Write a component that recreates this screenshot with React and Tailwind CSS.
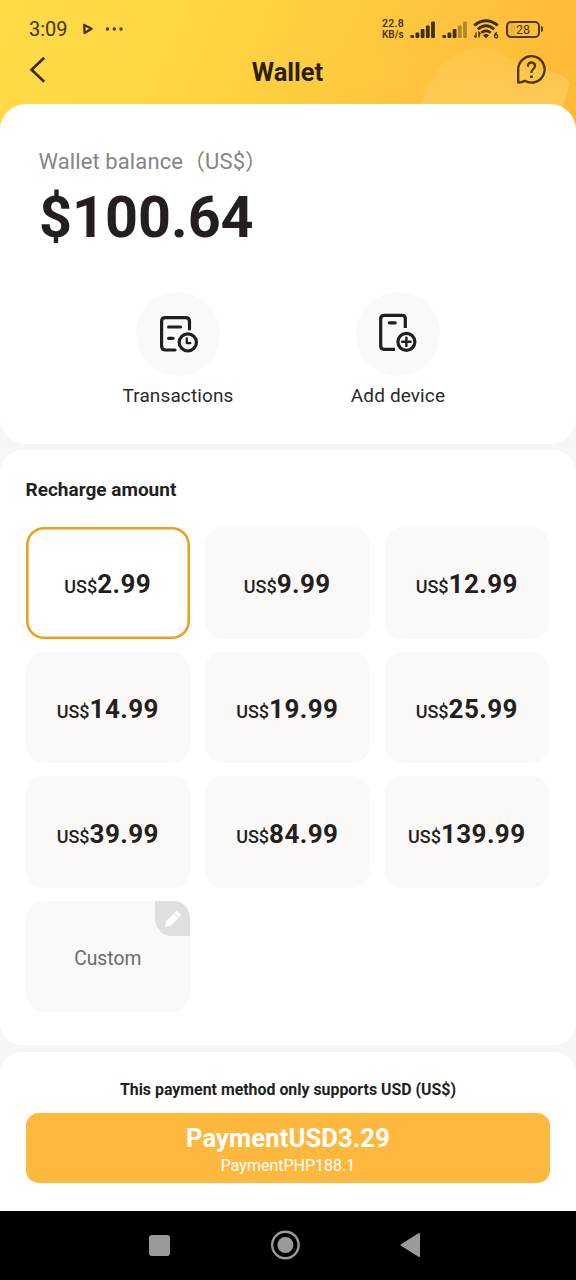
import React from "react";

const amounts = ["2.99", "9.99", "12.99", "14.99", "19.99", "25.99", "39.99", "84.99", "139.99"];

function SignalBars({ weak }) {
  const bars = [
    [0, 14, 3], [5.2, 11.5, 5.5], [10.4, 8, 9], [15.6, 4.5, 12.5], [20.8, 0.5, 16.5],
  ];
  return (
    <svg className="h-[17px] w-[26px]" viewBox="0 0 26 17" fill="#3d2f10">
      {bars.map(([x, y, h], i) => (
        <rect key={x} x={x + 0.3} y={y} width="3.8" height={h} rx="1" opacity={weak && i > 2 ? 0.4 : 1} />
      ))}
    </svg>
  );
}

function StatusBar() {
  return (
    <div className="flex h-[58px] items-center pl-[29px] pr-[33px] text-[#453611]">
      <span className="w-[40px] text-[20px] leading-6">3:09</span>
      <svg className="ml-[13px] h-[12px] w-[12px]" viewBox="0 0 12 12">
        <path d="M2.2 2 L9.6 5.8 L2.6 10 Z" fill="none" stroke="#453611" strokeWidth="2.4" strokeLinejoin="round" />
      </svg>
      <svg className="ml-[11px] h-[4px] w-[20px]" viewBox="0 0 20 4" fill="#453611">
        <circle cx="2.5" cy="2" r="1.7" /><circle cx="9.3" cy="2" r="1.7" /><circle cx="16" cy="2" r="1.7" />
      </svg>
      <div className="ml-auto flex items-center">
        <div className="mr-px w-[27px] font-semibold leading-[11px]">
          <div className="whitespace-nowrap text-[10.5px] tracking-[0.25px]">22.8</div>
          <div className="whitespace-nowrap text-[10px]">KB/s</div>
        </div>
        <SignalBars />
        <span className="w-[6px]" />
        <SignalBars weak />
        <svg className="ml-[5px] h-[20px] w-[26px]" viewBox="0 0 26 20" fill="none" stroke="#3d2f10">
          <path d="M1.2 6.4 Q13 -3 24.8 6.4" strokeWidth="2.8" />
          <path d="M4.8 10.2 Q13 3.2 21.2 10.2" strokeWidth="2.8" />
          <path d="M8.2 13.8 Q13 10 17.8 13.8" strokeWidth="2.5" />
          <path d="M10 16.2 Q13 13.8 16 16.2 L13 19.2 Z" fill="#3d2f10" stroke="none" />
          <path d="M3 13.5 V18.5 M1.2 16.8 L3 18.5 M6 18.5 V13.5 L7.6 15.2" strokeWidth="1.4" />
          <path d="M24 13.7 Q21.5 14.5 21.5 17 A1.6 1.6 0 1 0 23.1 15.6 Q22 15.7 21.6 16.8" strokeWidth="1.3" />
        </svg>
        <div className="ml-[7px] flex items-center">
          <div className="flex h-[17px] w-[34px] items-center justify-center rounded-[5px] border-2 border-[#4d3a10] bg-linear-to-r from-[#eeb43a] from-25% to-transparent to-25% pt-[2px] text-[12.5px] leading-none">28</div>
          <div className="ml-px h-[6px] w-[2px] rounded-r-sm bg-[#4d3a10]" />
        </div>
      </div>
    </div>
  );
}

function TransactionsIcon() {
  return (
    <svg className="ml-px h-10 w-10" viewBox="0 0 40 40" fill="none" stroke="#211e1c" strokeWidth="3.2" strokeLinecap="round" strokeLinejoin="round">
      <path d="M30.5 15 V7.5 Q30.5 3.7 26.5 3.7 H6.5 Q2.6 3.7 2.6 7.5 V32 Q2.6 36 6.5 36 H16" />
      <path d="M9.6 13 H21.5 M9.6 24.3 H14" />
      <circle cx="28.8" cy="28.4" r="8.6" />
      <path d="M27.8 24.5 V29.2 H31.3" strokeWidth="2.3" />
    </svg>
  );
}

function AddDeviceIcon() {
  return (
    <svg className="mb-[2px] h-10 w-10" viewBox="0 0 40 40" fill="none" stroke="#211e1c" strokeWidth="3.2">
      <path d="M27.3 15 V5.6 Q27.3 2.4 24.2 2.4 H6.2 Q2.7 2.4 2.7 5.6 V33 Q2.7 36.3 6.2 36.3 H17" />
      <path d="M11.4 9.8 H17.2" strokeLinecap="round" />
      <circle cx="28.4" cy="28.8" r="8.5" />
      <path d="M28.4 24.6 V33 M24.2 28.8 H32.6" strokeWidth="2.4" strokeLinecap="round" />
    </svg>
  );
}

function Action({ label, children }) {
  return (
    <div className="flex w-[220px] flex-col items-center">
      <div className="flex h-[84px] w-[84px] items-center justify-center rounded-full bg-[#faf9f7]">{children}</div>
      <span className="mt-[7px] text-[19px] leading-[26px] tracking-[0.12px] text-[#2c2927]">{label}</span>
    </div>
  );
}

export default function App() {
  return (
    <div className="flex h-[1280px] w-[576px] flex-col overflow-hidden bg-[#f6f6f6] font-[Roboto,'Noto_Sans_CJK_SC',sans-serif] text-[#241f1e]">
      <div className="relative h-[104px] shrink-0">
        <svg className="absolute left-0 top-0 h-[140px] w-[576px]" viewBox="0 0 576 140">
          <defs>
            <linearGradient id="sun" gradientUnits="userSpaceOnUse" x1="0" y1="0" x2="520" y2="230">
              <stop offset="0" stopColor="#ffdb48" />
              <stop offset="0.35" stopColor="#ffd542" />
              <stop offset="0.7" stopColor="#ffc53e" />
              <stop offset="1" stopColor="#ffb936" />
            </linearGradient>
            <linearGradient id="glow" x1="0" y1="0" x2="0.2" y2="1">
              <stop offset="0" stopColor="#ffcc58" stopOpacity="0.3" />
              <stop offset="1" stopColor="#ffcc5c" stopOpacity="0.9" />
            </linearGradient>
          </defs>
          <rect width="576" height="140" fill="url(#sun)" />
          <path d="M418 120 Q424 78 450 58 Q480 38 505 55 Q518 66 545 70 Q570 76 569 84 L560 120 Z" fill="url(#glow)" />
        </svg>
        <div className="relative">
          <StatusBar />
          <div className="flex h-[26px] items-center justify-between pl-[29px] pr-[30px]">
            <svg className="mb-[2px] h-[28px] w-[18px]" viewBox="0 0 18 28" fill="none" stroke="#3a2d12" strokeWidth="2.7">
              <path d="M15.2 1.8 L2.6 13.8 L15.2 25.8" />
            </svg>
            <h1 className="ml-[12px] mt-px text-[25.5px] font-bold leading-7 text-[#2b200c]">Wallet</h1>
            <svg className="mb-[2px] h-[30px] w-[30px]" viewBox="0 0 30 30" fill="none" stroke="#473710" strokeWidth="2.3" strokeLinejoin="round">
              <path d="M2.2 27.7 V14.5 A13.2 13.2 0 1 1 8.7 25.8 Q6 27.5 2.2 27.7 Z" />
              <path d="M11.8 11.6 Q12 7.4 15.5 7.4 Q19 7.6 19 11 Q19 12.8 17 14.4 Q15.4 15.6 15.4 18" strokeWidth="2.2" />
              <circle cx="15.4" cy="21.7" r="1.5" fill="#473710" stroke="none" />
            </svg>
          </div>
        </div>
      </div>

      <section className="relative mt-[0.4px] h-[339.6px] shrink-0 rounded-[26px] bg-white pt-[43.6px]">
        <div className="pl-[38.5px] text-[22px] leading-7 tracking-[0.1px] text-[#858585]">Wallet balance（US$）</div>
        <div className="mt-[2px] pl-[39px] text-[57.5px] font-bold leading-[80px]">$100.64</div>
        <div className="mt-[34px] flex justify-center">
          <Action label="Transactions"><TransactionsIcon /></Action>
          <Action label="Add device"><AddDeviceIcon /></Action>
        </div>
      </section>

      <section className="mt-[6px] h-[595px] shrink-0 rounded-[22px] bg-white pl-[25.5px] pr-[27px] pt-[27px]">
        <h2 className="text-[19px] font-bold leading-[26px]">Recharge amount</h2>
        <div className="mt-[24px] grid grid-cols-3 gap-x-[15px] gap-y-[13px]">
          {amounts.map((a, i) => (
            <button
              key={a}
              className={
                i === 0
                  ? "flex h-[111.6px] items-center justify-center rounded-[18px] bg-white pt-[4px] shadow-[inset_0_0_0_2.6px_#eda01e]"
                  : i < 3
                    ? "flex h-[111.6px] items-center justify-center rounded-[18px] bg-[#faf9f7] pt-[4px]"
                    : "flex h-[111.6px] items-center justify-center rounded-[18px] bg-[#faf9f7] pt-[5px]"
              }
            >
              <span className="flex items-baseline">
                <span className="text-[18px] font-medium">US$</span>
                <span className="text-[26px] font-bold tracking-[0.4px]">{a}</span>
              </span>
            </button>
          ))}
          <button className="relative flex h-[111.6px] items-center justify-center rounded-[18px] bg-[#faf9f7] pt-[5px] text-[19.3px] text-[#6c6a69]">
            Custom
            <span className="absolute right-0 top-0 flex h-[35px] w-[35px] items-center justify-center rounded-bl-[17px] rounded-tr-[17px] bg-[#dfdfdf]">
              <svg className="mt-[2px] h-[18px] w-[18px]" viewBox="0 0 18 18" fill="#fff">
                <path d="M1 17 L2 11.3 L9.7 3.7 L14.2 8.2 L6.5 16 Z M10.3 3.2 L12.1 1.4 Q13 .8 14 1.5 L16.5 4 Q17.2 4.8 16.5 5.8 L14.8 7.6 Z" />
              </svg>
            </span>
          </button>
        </div>
      </section>

      <section className="mt-[7px] flex h-[159px] shrink-0 flex-col items-center rounded-t-[22px] bg-white px-[26px] pt-[27px]">
        <p className="text-[15.9px] font-bold leading-[22px]">This payment method only supports USD (US$)</p>
        <button className="mt-[12px] flex h-[70px] w-full flex-col items-center rounded-[13px] bg-[#ffb83e] pt-[10px] text-white">
          <span className="text-[25.5px] font-bold leading-[30px] tracking-[0.15px]">PaymentUSD3.29</span>
          <span className="mt-[3px] text-[16px] leading-[20px]">PaymentPHP188.1</span>
        </button>
      </section>

      <nav className="flex h-[69px] shrink-0 items-center bg-black pl-[149px]">
        <span className="h-[21px] w-[21px] rounded-[3px] bg-[#9a9a9a]" />
        <svg className="ml-[100px] h-[30px] w-[30px]" viewBox="0 0 30 30">
          <circle cx="15.4" cy="15" r="13.2" fill="none" stroke="#9a9a9a" strokeWidth="2.4" />
          <circle cx="15.4" cy="15" r="8" fill="#9a9a9a" />
        </svg>
        <svg className="ml-[100px] h-[26px] w-[20px]" viewBox="0 0 20 26">
          <path d="M1.5 13 L19 2 V24 Z" fill="#9a9a9a" stroke="#9a9a9a" strokeWidth="2" strokeLinejoin="round" />
        </svg>
      </nav>
    </div>
  );
}
